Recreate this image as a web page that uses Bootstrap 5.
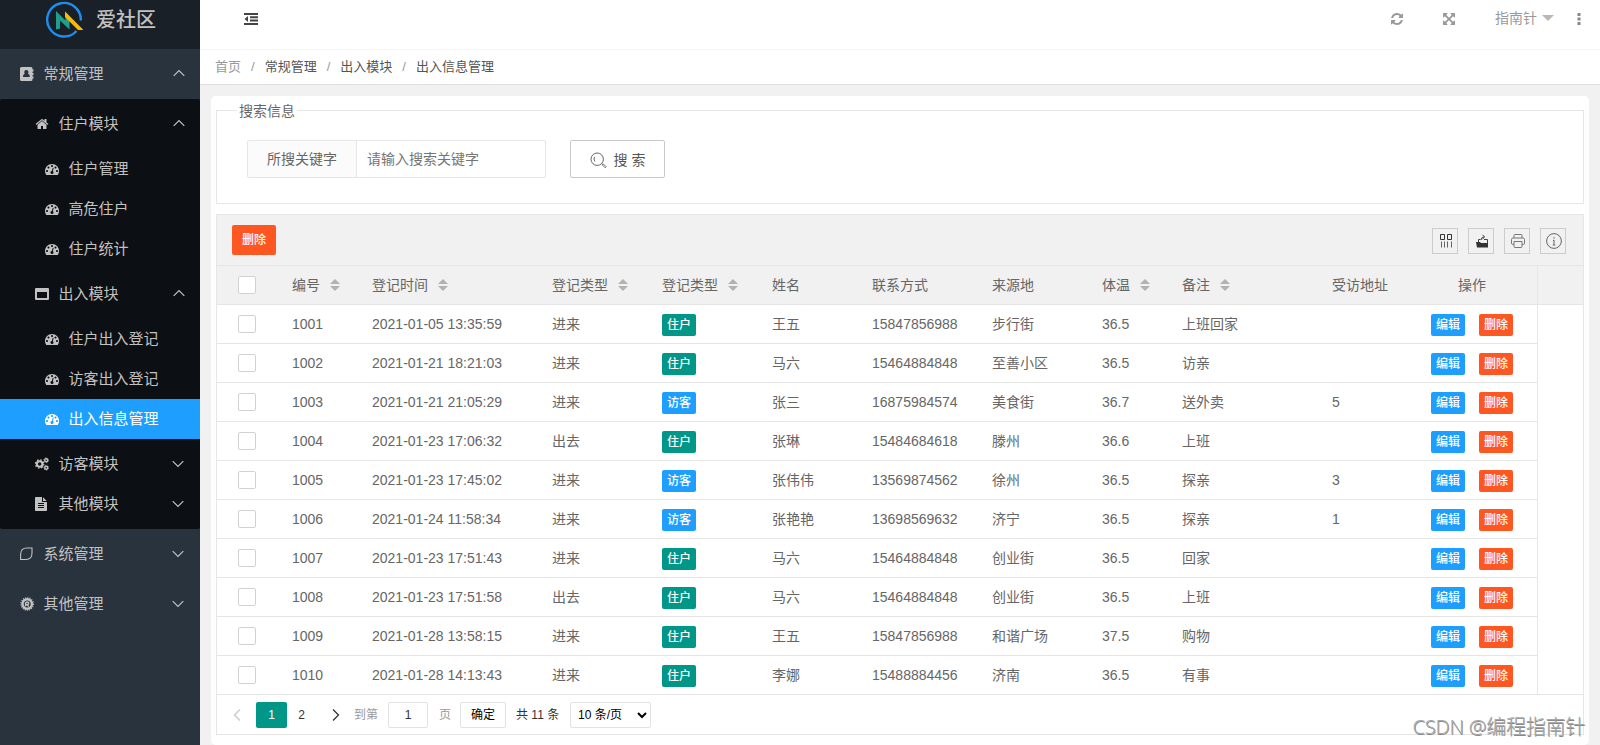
<!DOCTYPE html>
<html lang="zh-CN">
<head>
  <meta charset="UTF-8">
  <meta name="viewport" content="width=device-width, initial-scale=1">
  <title>爱社区</title>
  <link href="https://cdn.jsdelivr.net/npm/bootstrap@5.3.3/dist/css/bootstrap.min.css" rel="stylesheet">
  <style>
    body { font: 14px/1.5 "Liberation Sans", "Noto Sans CJK SC", sans-serif; color: #666; background: #f1f1f1; height: 745px; overflow: hidden; }
    svg { flex-shrink: 0; }

    /* sidebar */
    .side { width: 200px; height: 745px; background: #28333e; color: #c2c2c2; font-size: 15px; }
    .side-logo { height: 49px; background: #192027; padding: 0 0 9px 45px; font-size: 20px; font-weight: 500; gap: 13px; }
    .side .nav-link { color: inherit; height: 40px; padding: 0 16px 0 35px; display: flex; align-items: center; white-space: nowrap; }
    .side .nav-link svg:first-child { width: 14px; height: 14px; margin-right: 9.5px; }
    .side .nav-link.top-item { height: 50px; padding-left: 20px; }
    .side .nav-link.leaf-item { padding-left: 45px; }
    .side .nav-link.active { background: #1e9fff; color: #fff; }
    .side .arrow { width: 12px; height: 8px; margin-left: auto; }
    .side .arrow.up { transform: translate(1px, -1px); }
    .side-group { background: #0c0f13; padding: 5px 0; border-radius: 2px; }
    .side-sub { padding: 5px 0; }

    /* header */
    .top-bar { height: 50px; background: #fff; border-bottom: 1px solid #f6f6f6; padding: 0 19px 12px 44px; color: #999; }
    .top-bar .full-icon { margin: 0 39px 0 38px; }
    .top-bar .caret-down { border: 6px solid transparent; border-top-color: #b8b8b8; border-bottom: 0; margin: 0 23px 2px 5px; }
    .crumb-bar { height: 35px; background: #fff; border-bottom: 1px solid #e2dede; padding-left: 15px; font-size: 13px; }
    .crumb-bar .breadcrumb-item { padding: 0; color: #555; }
    .crumb-bar .breadcrumb-item:first-child { color: #999; }
    .crumb-bar .breadcrumb-item + .breadcrumb-item::before { color: #999; padding: 0 10px; }

    .panel { margin: 11px 11px 0; background: #fff; border-radius: 5px; padding: 5px; height: 649px; }

    /* search box */
    .search-set { border: 1px solid #e6e6e6; height: 94px; margin: 9px 0 10px; padding: 0 30px 0; position: relative; }
    .search-set legend { position: absolute; left: 20px; top: -10px; width: auto; background: #fff; padding: 0 2px; margin: 0; font-size: 14px; line-height: 21px; float: none; }
    .search-set .form-line { padding-top: 29px; gap: 24px; }
    .search-set .input-group { width: 299px; height: 38px; }
    .search-set .input-group-text { width: 110px; justify-content: center; padding: 0; background: #fbfbfb; border-color: #e6e6e6; border-radius: 2px; color: #666; font-size: 14px; }
    .search-set .form-control { border-color: #e6e6e6; border-radius: 2px; font-size: 14px; padding: 0 10px; }
    .search-set .form-control::placeholder { color: #757575; }
    .btn-search { width: 95px; height: 38px; border: 1px solid #c9c9c9; border-radius: 2px; background: #fff; color: #555; font-size: 14px; padding: 2px 0 0; gap: 7px; }

    /* table */
    .grid-view { border: 1px solid #e6e6e6; }
    .grid-tools { height: 51px; background: #f1f1f1; border-bottom: 1px solid #e6e6e6; padding: 0 17px 0 15px; }
    .tool-box { width: 26px; height: 26px; border: 1px solid #ccc; display: flex; align-items: center; justify-content: center; color: #333; padding: 1px 0 0 1px; }
    .tool-list { gap: 10px; padding-top: 1px; }
    .btn-red { background: #ff5722; color: #fff; }
    .btn-blue { background: #1e9fff; color: #fff; }
    .btn-green { background: #009688; color: #fff; }
    .btn-del { width: 44px; height: 30px; padding: 0; font-size: 12px; font-weight: 500; border: 0; border-radius: 2px; }
    .btn-mini { display: inline-flex; align-items: center; justify-content: center; width: 34px; height: 22px; padding: 0; font-size: 12px; line-height: 1; border: 0; border-radius: 2px; vertical-align: middle; font-weight: 500; text-decoration: none; }
    .row-actions { gap: 14px; padding-top: 1px; }
    .data-grid { table-layout: fixed; margin: 0; width: 1366px; border-collapse: separate; border-spacing: 0; }
    .data-grid > :not(caption) > * > * { height: 39px; padding: 0 15px; vertical-align: middle; color: #666; font-weight: 400; border-bottom: 1px solid #e6e6e6; white-space: nowrap; line-height: 22px; background: transparent; }
    .data-grid > thead > tr > th { background: #f1f1f1; }
    .data-grid > tbody > tr > td:last-child { border-bottom: 0; }
    .data-grid > tbody > tr:last-child > td { border-bottom: 0; height: 38px; }
    .data-grid > :not(caption) > tr > :nth-child(12) { border-right: 1px solid #e6e6e6; }
    .data-grid > :not(caption) > tr > :first-child { padding-left: 21px; }
    .data-grid .form-check-input { display: block; width: 18px; height: 18px; margin: 0; border: 1px solid #d2d2d2; border-radius: 2px; }
    .sorter { display: inline-flex; flex-direction: column; gap: 2px; margin: -2px 0 0 10px; vertical-align: middle; }
    .sorter::before, .sorter::after { content: ""; border: 5px solid transparent; }
    .sorter::before { border-top: 0; border-bottom-color: #b2b2b2; }
    .sorter::after { border-bottom: 0; border-top-color: #b2b2b2; }

    /* pagination */
    .pager { height: 40px; border-top: 1px solid #e6e6e6; padding: 7px 0 6px 16px; font-size: 12px; line-height: 26px; color: #333; }
    .pager .page-link { border: 0; height: 26px; padding: 0; font-size: 12px; line-height: 26px; color: #333; text-align: center; background: none; }
    .pager .page-prev { width: 24px; }
    .pager .page-num { width: 31px; }
    .pager .page-next { width: 24px; }
    .pager .active .page-link { background: #009688; color: #fff; border-radius: 2px; }
    .pager .skip-text { color: #999; margin: 0 10px 0 14px; }
    .pager .skip-unit { color: #999; margin: 0 9px 0 11px; }
    .pager .page-total { width: 44px; margin: 0 10px; }
    .pager .page-input, .pager .page-size, .pager .btn-go { height: 26px; border: 1px solid #e2e2e2; border-radius: 2px; background: #fff; font-size: 12px; padding: 0; color: #333; line-height: 24px; }
    .pager .page-input { width: 40px; }
    .pager .btn-go { width: 46px; color: #000; }
    .pager .page-size { width: 81px; padding-left: 3px; color: #000; }

    .watermark { position: absolute; right: 15px; top: 712px; font: 20px/30px "Noto Sans", "Noto Sans CJK SC", sans-serif; font-weight: 300; color: #a8a8a8; text-shadow: .6px .6px 0 #888; white-space: nowrap; letter-spacing: -.25px; }
  </style>
</head>
<body>

<!-- Icon set -->
<svg class="d-none">
  <symbol id="i-dash" viewBox="0 0 1792 1792"><path fill="currentColor" d="M384 1152q0-53-37.500-90.500t-90.500-37.500-90.500 37.500-37.500 90.500 37.500 90.500 90.500 37.500 90.500-37.500 37.500-90.500zm192-448q0-53-37.500-90.500t-90.500-37.500-90.500 37.500-37.500 90.500 37.500 90.500 90.500 37.500 90.500-37.500 37.500-90.500zm428 481l101-382q6-26-7.500-48.500t-38.500-29.500-48 6.500-30 39.500l-101 382q-60 5-107 43.500t-63 98.500q-20 77 20 146t117 89 146-20 89-117q16-60-6-117t-72-91zm660-33q0-53-37.500-90.500t-90.500-37.500-90.500 37.500-37.500 90.500 37.500 90.500 90.500 37.500 90.500-37.500 37.500-90.500zm-640-640q0-53-37.500-90.500t-90.500-37.500-90.500 37.500-37.500 90.500 37.500 90.500 90.500 37.500 90.500-37.500 37.500-90.500zm448 192q0-53-37.500-90.500t-90.500-37.500-90.500 37.500-37.500 90.500 37.500 90.500 90.500 37.500 90.500-37.500 37.500-90.500zm320 448q0 261-141 483-19 29-54 29h-1402q-35 0-54-29-141-221-141-483 0-182 71-348t191-286 286-191 348-71 348 71 286 191 191 286 71 348z"/></symbol>
  <symbol id="i-home" viewBox="0 0 1792 1792"><path fill="currentColor" d="M1472 992v480q0 26-19 45t-45 19h-384v-384h-256v384h-384q-26 0-45-19t-19-45v-480q0-1 .5-3t.5-3l575-474 575 474q1 2 1 6zm223-69l-62 74q-8 9-21 11h-3q-13 0-21-7l-692-577-692 577q-12 8-24 7-13-2-21-11l-62-74q-8-10-7-23.500t11-21.500l719-599q32-26 76-26t76 26l244 204v-195q0-14 9-23t23-9h192q14 0 23 9t9 23v408l219 182q10 8 11 21.500t-7 23.500z"/></symbol>
  <symbol id="i-file" viewBox="0 0 1792 1792"><path fill="currentColor" d="M1468 476q14 14 28 36h-472v-472q22 14 36 28zm-476 164h544v1056q0 40-28 68t-68 28h-1344q-40 0-68-28t-28-68v-1600q0-40 28-68t68-28h800v544q0 40 28 68t68 28zm160 736v-64q0-14-9-23t-23-9h-704q-14 0-23 9t-9 23v64q0 14 9 23t23 9h704q14 0 23-9t9-23zm0-256v-64q0-14-9-23t-23-9h-704q-14 0-23 9t-9 23v64q0 14 9 23t23 9h704q14 0 23-9t9-23zm0-256v-64q0-14-9-23t-23-9h-704q-14 0-23 9t-9 23v64q0 14 9 23t23 9h704q14 0 23-9t9-23z"/></symbol>
  <symbol id="i-refresh" viewBox="0 0 1792 1792"><path fill="currentColor" d="M1639 1056q0 5-1 7-64 268-268 434.500t-478 166.500q-146 0-282.500-55t-243.500-157l-129 129q-19 19-45 19t-45-19-19-45v-448q0-26 19-45t45-19h448q26 0 45 19t19 45-19 45l-137 137q71 66 161 102t187 36q134 0 250-65t186-179q11-17 53-117 8-23 30-23h192q13 0 22.500 9.500t9.500 22.500zm25-800v448q0 26-19 45t-45 19h-448q-26 0-45-19t-19-45 19-45l138-138q-148-137-349-137-134 0-250 65t-186 179q-11 17-53 117-8 23-30 23h-199q-13 0-22.500-9.500t-9.500-22.500v-7q65-268 270-434.500t480-166.500q146 0 284 55.500t245 156.500l130-129q19-19 45-19t45 19 19 45z"/></symbol>
  <symbol id="i-full" viewBox="0 0 1792 1792"><path fill="currentColor" d="M1411 541l-355 355 355 355 144-144q29-31 70-14 39 17 39 59v448q0 26-19 45t-45 19h-448q-42 0-59-40-17-39 14-69l144-144-355-355-355 355 144 144q31 30 14 69-17 40-59 40h-448q-26 0-45-19t-19-45v-448q0-42 40-59 39-17 69 14l144 144 355-355-355-355-144 144q-19 19-45 19-12 0-24-5-40-17-40-59v-448q0-26 19-45t45-19h448q42 0 59 40 17 39-14 69l-144 144 355 355 355-355-144-144q-31-30-14-69 17-40 59-40h448q26 0 45 19t19 45v448q0 42-39 59-13 5-25 5-26 0-45-19z"/></symbol>
  <symbol id="i-book" viewBox="0 0 14 14"><path fill="currentColor" fill-rule="evenodd" d="M1.500 0H11q1.500 0 1.500 1.500v1h1v2h-1V6h1v2h-1v1.500h1v2h-1v1Q12.500 14 11 14H1.500Q0 14 0 12.500v-11Q0 0 1.500 0zM6.300 3a2 2 0 0 0-1.500 3.400Q2.900 7 2.900 10h7q0-3-2-3.600A2 2 0 0 0 6.300 3z"/></symbol>
  <symbol id="i-window" viewBox="0 0 14 14"><path fill="currentColor" fill-rule="evenodd" d="M1 1h12q1 0 1 1v10q0 1-1 1H1q-1 0-1-1V2q0-1 1-1zm1 4v6h10V5z"/></symbol>
  <symbol id="i-cogs" viewBox="0 0 15 14"><g fill="none" stroke="currentColor"><circle cx="5" cy="7" r="3" stroke-width="2.300"/><circle cx="5" cy="7" r="4.500" stroke-width="1.300" stroke-dasharray="1.770 1.770"/><circle cx="12" cy="3" r="1.600" stroke-width="1.500"/><circle cx="12" cy="3" r="2.600" stroke-width=".8" stroke-dasharray="1.360 1.360"/><circle cx="12" cy="11" r="1.600" stroke-width="1.500"/><circle cx="12" cy="11" r="2.600" stroke-width=".8" stroke-dasharray="1.360 1.360"/></g></symbol>
  <symbol id="i-leaf" viewBox="0 0 14 14"><path fill="none" stroke="currentColor" stroke-width="1.100" d="M.6 12.500V7.500Q.6 1 7 1h5v5q0 6.500-6 6.500z"/></symbol>
  <symbol id="i-badge" viewBox="0 0 14 14"><g fill="none" stroke="currentColor"><circle cx="7.200" cy="7" r="6.200" stroke-width="1.300" stroke-dasharray="1 1.200"/><circle cx="7.200" cy="7" r="4.700" stroke-width="2.400"/><path stroke-width="1.300" d="M5.600 9.300V6.500Q5.600 5 7.100 5t1.700 1.300q0 1.200-2.500 1.200L9 9.500"/></g></symbol>
  <symbol id="i-up" viewBox="0 0 12 8"><path fill="none" stroke="currentColor" stroke-width="1.200" d="M.7 6.800 6 1.500l5.300 5.300"/></symbol>
  <symbol id="i-down" viewBox="0 0 12 8"><path fill="none" stroke="currentColor" stroke-width="1.200" d="M.7 1.200 6 6.500l5.300-5.300"/></symbol>
</svg>

<div class="d-flex">
  <!-- Sidebar -->
  <aside class="side">
    <div class="side-logo d-flex align-items-center">
      <svg width="38" height="38" viewBox="0 0 38 38"><path d="M35.800 19.500A16.800 16.800 0 1 0 31.500 30" fill="none" stroke="#1e8fee" stroke-width="2.400"/><path d="M11 28.500V10l9.500 9.500V11l4 4v13.500L15 19.500v8z" fill="#1fa08c"/><path d="M20 10.500 38.500 29H33L20 16z" fill="#ffb800"/></svg>
      <span>爱社区</span>
    </div>
    <nav class="nav flex-column flex-nowrap">
      <a class="nav-link top-item"><svg><use href="#i-book"/></svg>常规管理<svg class="arrow up"><use href="#i-up"/></svg></a>
      <div class="side-group">
        <a class="nav-link"><svg><use href="#i-home"/></svg>住户模块<svg class="arrow up"><use href="#i-up"/></svg></a>
        <div class="side-sub">
          <a class="nav-link leaf-item"><svg><use href="#i-dash"/></svg>住户管理</a>
          <a class="nav-link leaf-item"><svg><use href="#i-dash"/></svg>高危住户</a>
          <a class="nav-link leaf-item"><svg><use href="#i-dash"/></svg>住户统计</a>
        </div>
        <a class="nav-link"><svg><use href="#i-window"/></svg>出入模块<svg class="arrow up"><use href="#i-up"/></svg></a>
        <div class="side-sub">
          <a class="nav-link leaf-item"><svg><use href="#i-dash"/></svg>住户出入登记</a>
          <a class="nav-link leaf-item"><svg><use href="#i-dash"/></svg>访客出入登记</a>
          <a class="nav-link leaf-item active"><svg><use href="#i-dash"/></svg>出入信息管理</a>
        </div>
        <a class="nav-link"><svg><use href="#i-cogs"/></svg>访客模块<svg class="arrow"><use href="#i-down"/></svg></a>
        <a class="nav-link"><svg><use href="#i-file"/></svg>其他模块<svg class="arrow"><use href="#i-down"/></svg></a>
      </div>
      <a class="nav-link top-item"><svg><use href="#i-leaf"/></svg>系统管理<svg class="arrow"><use href="#i-down"/></svg></a>
      <a class="nav-link top-item"><svg><use href="#i-badge"/></svg>其他管理<svg class="arrow"><use href="#i-down"/></svg></a>
    </nav>
  </aside>

  <main class="flex-grow-1">
    <!-- Header -->
    <header class="top-bar d-flex align-items-center">
      <svg width="14" height="12" viewBox="0 0 14 12" fill="#444"><path d="M0 0h14v2H0zM6 3.300h8v2H6zM6 6.600h8v2H6zM0 10h14v2H0zM4 3v6L.5 6z"/></svg>
      <svg class="ms-auto" width="14" height="14"><use href="#i-refresh"/></svg>
      <svg class="full-icon" width="14" height="14"><use href="#i-full"/></svg>
      <span>指南针</span><span class="caret-down"></span>
      <svg width="4" height="12" viewBox="0 0 4 12" fill="#888"><path d="M.5 0h3v3h-3zM.5 4.500h3v3h-3zM.5 9h3v3h-3z"/></svg>
    </header>
    <div class="crumb-bar d-flex align-items-center">
      <ol class="breadcrumb m-0">
        <li class="breadcrumb-item">首页</li>
        <li class="breadcrumb-item">常规管理</li>
        <li class="breadcrumb-item">出入模块</li>
        <li class="breadcrumb-item">出入信息管理</li>
      </ol>
    </div>

    <div class="panel">
      <!-- Search -->
      <fieldset class="search-set">
        <legend>搜索信息</legend>
        <div class="form-line d-flex">
          <div class="input-group">
            <span class="input-group-text">所搜关键字</span>
            <input type="text" class="form-control" placeholder="请输入搜索关键字">
          </div>
          <button type="button" class="btn btn-search d-flex align-items-center justify-content-center">
            <svg width="17" height="17" viewBox="0 0 17 17" fill="none" stroke="#666"><circle cx="7.200" cy="7.200" r="6.200"/><path d="M4.500 4.800q-1.200 2.200.3 4.500M11.800 11.500l1 1"/><path d="m12.200 12.800 1-1 3 3-1 1z" stroke-width=".9"/></svg>
            搜 索
          </button>
        </div>
      </fieldset>

      <!-- Table -->
      <div class="grid-view">
        <div class="grid-tools d-flex align-items-center">
          <button type="button" class="btn btn-red btn-del">删除</button>
          <div class="tool-list d-flex ms-auto">
            <span class="tool-box"><svg width="14" height="14" viewBox="0 0 14 14" fill="none" stroke="currentColor"><path d="M1.500.5h4v5h-4zM8.500.5h4v5h-4z"/><path d="M2.500 7.500v6M5.500 7.500v6M8.500 7.500v6M12.500 7.500v6" stroke="#666"/></svg></span>
            <span class="tool-box"><svg width="14" height="14" viewBox="0 0 14 14"><path fill="#333" d="M1 8h4l1 1h7v4.500H2z"/><path d="M3.500 8V5.500h2M9 5.500h3.500V9M6 6q.3-3 3-3M7.500.8l2.200 2.200-2.200 2" fill="none" stroke="#444"/></svg></span>
            <span class="tool-box"><svg width="14" height="14" viewBox="0 0 14 14" fill="none" stroke="#777"><path d="M3 4V1.200Q3 .5 3.700.5h6.600q.7 0 .7.700V4M3 10.500H1.800Q.5 10.500.5 9V5.500Q.5 4 2 4h10q1.500 0 1.500 1.500V9q0 1.500-1.300 1.500H11M3 7.500h8v5q0 1-1 1H4q-1 0-1-1z"/></svg></span>
            <span class="tool-box"><svg width="16" height="16" viewBox="0 0 16 16" fill="none" stroke="#666"><circle cx="8" cy="8" r="7.400"/><path d="M8 7v5M7 7.300h1M6.800 12h2.400M8 4v1.500"/></svg></span>
          </div>
        </div>
        <table class="table data-grid">
          <colgroup>
            <col style="width:60px"><col style="width:80px"><col style="width:180px"><col style="width:110px"><col style="width:110px"><col style="width:100px"><col style="width:120px"><col style="width:110px"><col style="width:80px"><col style="width:150px"><col style="width:90px"><col style="width:131px"><col>
          </colgroup>
          <thead>
            <tr>
              <th><input class="form-check-input" type="checkbox"></th>
              <th>编号<span class="sorter"></span></th>
              <th>登记时间<span class="sorter"></span></th>
              <th>登记类型<span class="sorter"></span></th>
              <th>登记类型<span class="sorter"></span></th>
              <th>姓名</th>
              <th>联系方式</th>
              <th>来源地</th>
              <th>体温<span class="sorter"></span></th>
              <th>备注<span class="sorter"></span></th>
              <th>受访地址</th>
              <th class="text-center">操作</th>
              <th></th>
            </tr>
          </thead>
          <tbody id="records"></tbody>
        </table>
        <!-- Pagination -->
        <div class="pager d-flex">
          <ul class="pagination m-0">
            <li class="page-item"><a class="page-link page-prev d-flex align-items-center"><svg width="8" height="14" viewBox="0 0 8 14" fill="none" stroke="#ccc" stroke-width="1.500"><path d="M7 1.500 1.500 7 7 12.500"/></svg></a></li>
            <li class="page-item active"><a class="page-link page-num">1</a></li>
            <li class="page-item"><a class="page-link page-num">2</a></li>
            <li class="page-item"><a class="page-link page-next d-flex align-items-center justify-content-end"><svg width="8" height="14" viewBox="0 0 8 14" fill="none" stroke="#333" stroke-width="1.300"><path d="M1 1.500 6.500 7 1 12.500"/></svg></a></li>
          </ul>
          <span class="skip-text text-nowrap">到第</span>
          <input type="text" class="page-input text-center" value="1">
          <span class="skip-unit">页</span>
          <button type="button" class="btn-go">确定</button>
          <span class="page-total text-nowrap">共 11 条</span>
          <select class="page-size"><option>10 条/页</option></select>
        </div>
      </div>
    </div>
  </main>
</div>

<div class="watermark">CSDN @编程指南针</div>

<script src="https://cdn.jsdelivr.net/npm/bootstrap@5.3.3/dist/js/bootstrap.bundle.min.js"></script>
<script>
const records = [
  ['1001', '2021-01-05 13:35:59', '进来', '住户', '王五', '15847856988', '步行街', '36.5', '上班回家', ''],
  ['1002', '2021-01-21 18:21:03', '进来', '住户', '马六', '15464884848', '至善小区', '36.5', '访亲', ''],
  ['1003', '2021-01-21 21:05:29', '进来', '访客', '张三', '16875984574', '美食街', '36.7', '送外卖', '5'],
  ['1004', '2021-01-23 17:06:32', '出去', '住户', '张琳', '15484684618', '滕州', '36.6', '上班', ''],
  ['1005', '2021-01-23 17:45:02', '进来', '访客', '张伟伟', '13569874562', '徐州', '36.5', '探亲', '3'],
  ['1006', '2021-01-24 11:58:34', '进来', '访客', '张艳艳', '13698569632', '济宁', '36.5', '探亲', '1'],
  ['1007', '2021-01-23 17:51:43', '进来', '住户', '马六', '15464884848', '创业街', '36.5', '回家', ''],
  ['1008', '2021-01-23 17:51:58', '出去', '住户', '马六', '15464884848', '创业街', '36.5', '上班', ''],
  ['1009', '2021-01-28 13:58:15', '进来', '住户', '王五', '15847856988', '和谐广场', '37.5', '购物', ''],
  ['1010', '2021-01-28 14:13:43', '进来', '住户', '李娜', '15488884456', '济南', '36.5', '有事', '']
];

document.getElementById('records').innerHTML = records.map(r => {
  const cells = r.map((value, i) => {
    if (i !== 3) return `<td>${value}</td>`;
    const color = value === '住户' ? 'btn-green' : 'btn-blue';
    return `<td><span class="btn-mini ${color}">${value}</span></td>`;
  }).join('');
  return `<tr>
    <td><input class="form-check-input" type="checkbox"></td>
    ${cells}
    <td class="p-0"><div class="row-actions d-flex justify-content-center"><a class="btn-mini btn-blue">编辑</a><a class="btn-mini btn-red">删除</a></div></td>
    <td></td>
  </tr>`;
}).join('');
</script>

</body>
</html>
